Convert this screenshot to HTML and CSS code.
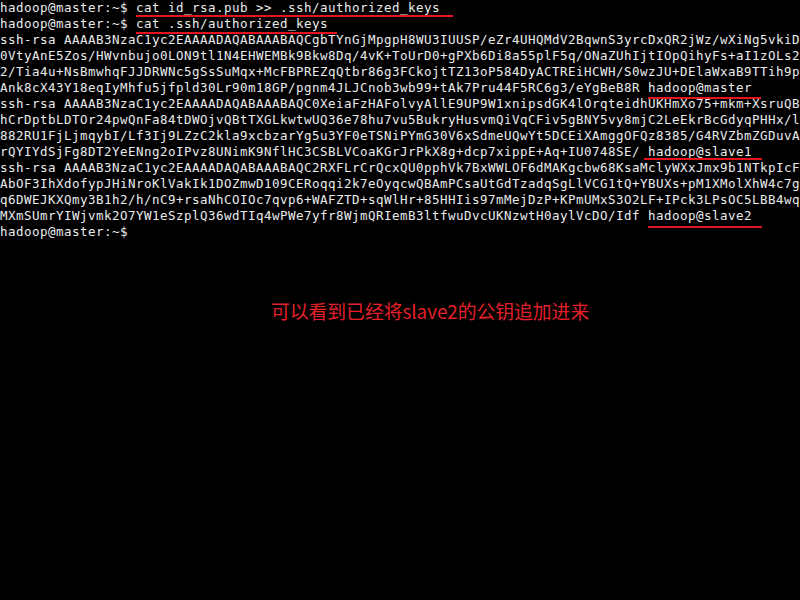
FILE: index.html
```html
<!DOCTYPE html>
<html>
<head>
<title>hadoop@master terminal</title>
<link rel="stylesheet" href="styles.css">
</head>
<body>
<div class="screen">
<pre class="console">hadoop@master:~$ <span class="mark mark-cmd1">cat id_rsa.pub &gt;&gt; .ssh/authorized_keys</span>
hadoop@master:~$ <span class="mark mark-cmd2">cat .ssh/authorized_keys</span>
ssh-rsa AAAAB3NzaC1yc2EAAAADAQABAAABAQCgbTYnGjMpgpH8WU3IUUSP/eZr4UHQMdV2BqwnS3yrcDxQR2jWz/wXiNg5vkiD
0VtyAnE5Zos/HWvnbujo0LON9tl1N4EHWEMBk9Bkw8Dq/4vK+ToUrD0+gPXb6Di8a55plF5q/ONaZUhIjtIOpQihyFs+aI1zOLs2
2/Tia4u+NsBmwhqFJJDRWNc5gSsSuMqx+McFBPREZqQtbr86g3FCkojtTZ13oP584DyACTREiHCWH/S0wzJU+DElaWxaB9TTih9p
Ank8cX43Y18eqIyMhfu5jfpld30Lr90m18GP/pgnm4JLJCnob3wb99+tAk7Pru44F5RC6g3/eYgBeB8R <span class="mark mark-host">hadoop@master</span>
ssh-rsa AAAAB3NzaC1yc2EAAAADAQABAAABAQC0XeiaFzHAFolvyAllE9UP9W1xnipsdGK4lOrqteidhUKHmXo75+mkm+XsruQB
hCrDptbLDTOr24pwQnFa84tDWOjvQBtTXGLkwtwUQ36e78hu7vu5BukryHusvmQiVqCFiv5gBNY5vy8mjC2LeEkrBcGdyqPHHx/l
882RU1FjLjmqybI/Lf3Ij9LZzC2kla9xcbzarYg5u3YF0eTSNiPYmG30V6xSdmeUQwYt5DCEiXAmggOFQz8385/G4RVZbmZGDuvA
rQYIYdSjFg8DT2YeENng2oIPvz8UNimK9NflHC3CSBLVCoaKGrJrPkX8g+dcp7xippE+Aq+IU0748SE/ <span class="mark mark-slave1">hadoop@slave1</span>
ssh-rsa AAAAB3NzaC1yc2EAAAADAQABAAABAQC2RXFLrCrQcxQU0pphVk7BxWWLOF6dMAKgcbw68KsaMclyWXxJmx9b1NTkpIcF
AbOF3IhXdofypJHiNroKlVakIk1DOZmwD109CERoqqi2k7eOyqcwQBAmPCsaUtGdTzadqSgLlVCG1tQ+YBUXs+pM1XMolXhW4c7g
q6DWEJKXQmy3B1h2/h/nC9+rsaNhCOIOc7qvp6+WAFZTD+sqWlHr+85HHIis97mMejDzP+KPmUMxS3O2LF+IPck3LPsOC5LBB4wq
MXmSUmrYIWjvmk2O7YW1eSzplQ36wdTIq4wPWe7yfr8WjmQRIemB3ltfwuDvcUKNzwtH0aylVcDO/Idf <span class="mark mark-slave2">hadoop@slave2</span>
hadoop@master:~$ </pre>
<p class="note">可以看到已经将slave2的公钥追加进来</p>
</div>
</body>
</html>
```

FILE: styles.css
```css
html,
body {
  margin: 0;
  height: 100%;
  background-color: #000;
}

.screen {
  width: 800px;
  height: 600px;
  overflow: hidden;
}

/* 8px cells, 16px rows, like the text console */
.console {
  margin: 0;
  font-family: "DejaVu Sans Mono", "Liberation Mono", monospace;
  font-size: 12.5px;
  letter-spacing: 0.475px;
  line-height: 16px;
  color: #ececec;
  white-space: pre;
}

/* red pen marks under the interesting bits */
.mark {
  position: relative;
}

.mark::after {
  content: "";
  position: absolute;
  left: 0;
  right: -9px;
  bottom: -2px;
  height: 2px;
  background-color: #e3141c;
}

.mark-cmd1::after {
  right: -13px;
}

.mark-cmd2::after {
  bottom: -3px;
}

.mark-host::after {
  bottom: -4px;
}

.mark-slave1::after {
  left: -4px;
  right: -10px;
  bottom: -1px;
}

.mark-slave2::after {
  right: -10px;
  bottom: -5px;
}

.note {
  margin: 57px 0 0 271px;
  font-family: "Noto Sans CJK SC", sans-serif;
  font-size: 18.8px;
  line-height: 28px;
  color: #e3202a;
}
```
